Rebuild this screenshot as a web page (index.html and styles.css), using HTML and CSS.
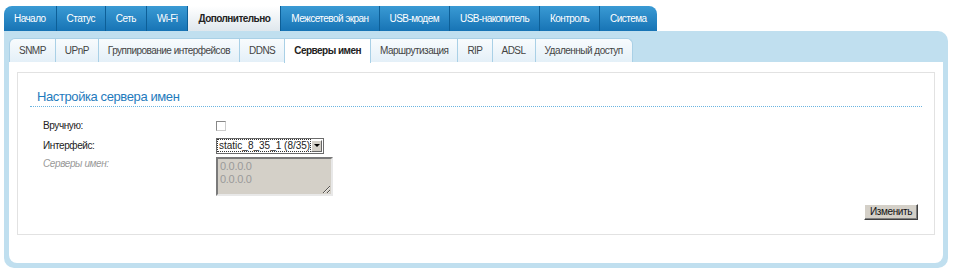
FILE: index.html
```html
<!DOCTYPE html>
<html lang="ru">
<head>
  <meta charset="UTF-8">
  <title>Серверы имен</title>
  <link rel="stylesheet" href="styles.css">
</head>
<body>
  <div class="page">
    <ul class="tabs">
      <li>Начало</li>
      <li>Статус</li>
      <li>Сеть</li>
      <li>Wi-Fi</li>
      <li class="active">Дополнительно</li>
      <li>Межсетевой экран</li>
      <li>USB-модем</li>
      <li>USB-накопитель</li>
      <li>Контроль</li>
      <li>Система</li>
    </ul>
    <div class="panel">
      <ul class="subtabs">
        <li>SNMP</li>
        <li>UPnP</li>
        <li>Группирование интерфейсов</li>
        <li>DDNS</li>
        <li class="active">Серверы имен</li>
        <li>Маршрутизация</li>
        <li>RIP</li>
        <li>ADSL</li>
        <li>Удаленный доступ</li>
      </ul>
      <div class="content">
        <div class="box">
          <h2 class="box-title">Настройка сервера имен</h2>
          <div class="row">
            <label class="label" for="manual">Вручную:</label>
            <input type="checkbox" id="manual" class="check">
          </div>
          <div class="row">
            <span class="label">Интерфейс:</span>
            <div class="select">
              <span class="select-value">static_8_35_1 (8/35)</span>
              <span class="select-arrow"></span>
            </div>
          </div>
          <div class="row row-top">
            <span class="label label-off">Серверы имен:</span>
            <textarea class="servers" disabled>0.0.0.0
0.0.0.0</textarea>
          </div>
          <div class="actions">
            <button class="btn">Изменить</button>
          </div>
        </div>
      </div>
    </div>
  </div>
</body>
</html>
```

FILE: styles.css
```css
/* Общие стили */
body {
  margin: 0;
  font-family: "Liberation Sans", Arial, sans-serif;
  letter-spacing: -0.4px;
  background: #fff;
  color: #222;
}

.page {
  padding: 6px 6px 0 4px;
}

/* Верхние вкладки */
.tabs {
  display: flex;
  list-style: none;
  margin: 0;
  padding: 0;
  height: 25px;
}

.tabs li {
  padding: 0 10px;
  line-height: 25px;
  font-size: 10px;
  letter-spacing: -0.55px;
  color: #fff;
  background: linear-gradient(#3a9ad4, #1774b5);
  border-left: 1px solid #0d5f97;
}

.tabs li:first-child {
  border-left: none;
  border-top-left-radius: 8px;
}

.tabs li:last-child {
  border-top-right-radius: 8px;
}

.tabs li.active {
  background: linear-gradient(#ffffff, #dfe7ed);
  color: #222;
  font-weight: bold;
}

/* Панель с подвкладками */
.panel {
  background: #c0dfef;
  border-radius: 0 10px 10px 10px;
  padding: 7px 5px 5px 5px;
}

.subtabs {
  display: flex;
  list-style: none;
  margin: 0;
  padding: 0;
  height: 24px;
}

.subtabs li {
  padding: 0 9px;
  line-height: 23px;
  font-size: 10px;
  letter-spacing: -0.52px;
  color: #444;
  background: linear-gradient(#f8fbfd, #e4f0f8);
  border: 1px solid #a9d0e6;
  border-bottom: none;
  margin-left: -1px;
}

.subtabs li:first-child {
  margin-left: 0;
  border-top-left-radius: 6px;
}

.subtabs li:last-child {
  border-top-right-radius: 6px;
}

.subtabs li.active {
  background: #fff;
  color: #222;
  font-weight: bold;
  height: 24px;
}

.content {
  background: #fff;
  border-radius: 0 0 8px 8px;
  padding: 10px 8px 28px 8px;
}

.box {
  border: 1px solid #e2e2e2;
  padding: 16px 12px 14px 12px;
}

.box-title {
  margin: 0 0 10px 0;
  padding: 0 0 2px 7px;
  font-size: 13px;
  line-height: 15px;
  font-weight: normal;
  color: #1f7bbd;
  border-bottom: 1px dotted #6ab4e0;
}

/* Строки формы */
.row {
  display: flex;
  align-items: center;
  min-height: 17px;
  padding-left: 13px;
  margin-bottom: 3px;
  font-size: 10px;
}

.row-top {
  align-items: flex-start;
}

.label {
  width: 173px;
  flex-shrink: 0;
}

.label-off {
  color: #999;
  font-style: italic;
  padding-top: 1px;
}

.check {
  appearance: none;
  width: 10px;
  height: 10px;
  margin: 0;
  background: #fff;
  border: 1px solid #888;
  border-right-color: #ccc;
  border-bottom-color: #ccc;
}

.select {
  display: flex;
  align-items: center;
  width: 106px;
  height: 14px;
  border: 1px solid #6b6b6b;
  background: #fff;
  font-size: 10px;
  letter-spacing: 0;
}

.select-value {
  flex: 1;
  margin: 1px;
  line-height: 11px;
  outline: 1px dotted #333;
  padding-left: 1px;
  white-space: nowrap;
}

.select-arrow {
  width: 12px;
  height: 12px;
  margin-right: 1px;
  background: #d4d0c8;
  border: 1px solid;
  border-color: #fff #666 #666 #fff;
  box-sizing: border-box;
  display: flex;
  align-items: center;
  justify-content: center;
}

.select-arrow::after {
  content: "";
  border-left: 3px solid transparent;
  border-right: 3px solid transparent;
  border-top: 3px solid #000;
}

.servers {
  width: 117px;
  height: 39px;
  box-sizing: border-box;
  margin: 0;
  padding: 1px 2px;
  background: #d4d0c8;
  border: 2px solid;
  border-color: #7a7a7a #e8e8e8 #e8e8e8 #7a7a7a;
  font-family: "Liberation Sans", Arial, sans-serif;
  font-size: 11px;
  letter-spacing: -0.3px;
  line-height: 13px;
  color: #9a9a9a;
}

.actions {
  text-align: right;
  margin-top: 5px;
  padding-right: 4px;
}

.btn {
  font-family: "Liberation Sans", Arial, sans-serif;
  font-size: 10px;
  letter-spacing: -0.4px;
  height: 16px;
  padding: 0 5px;
  background: #d4d0c8;
  color: #111;
  border: 1px solid;
  border-color: #fff #404040 #404040 #fff;
  box-shadow: inset -1px -1px #808080;
}
```
